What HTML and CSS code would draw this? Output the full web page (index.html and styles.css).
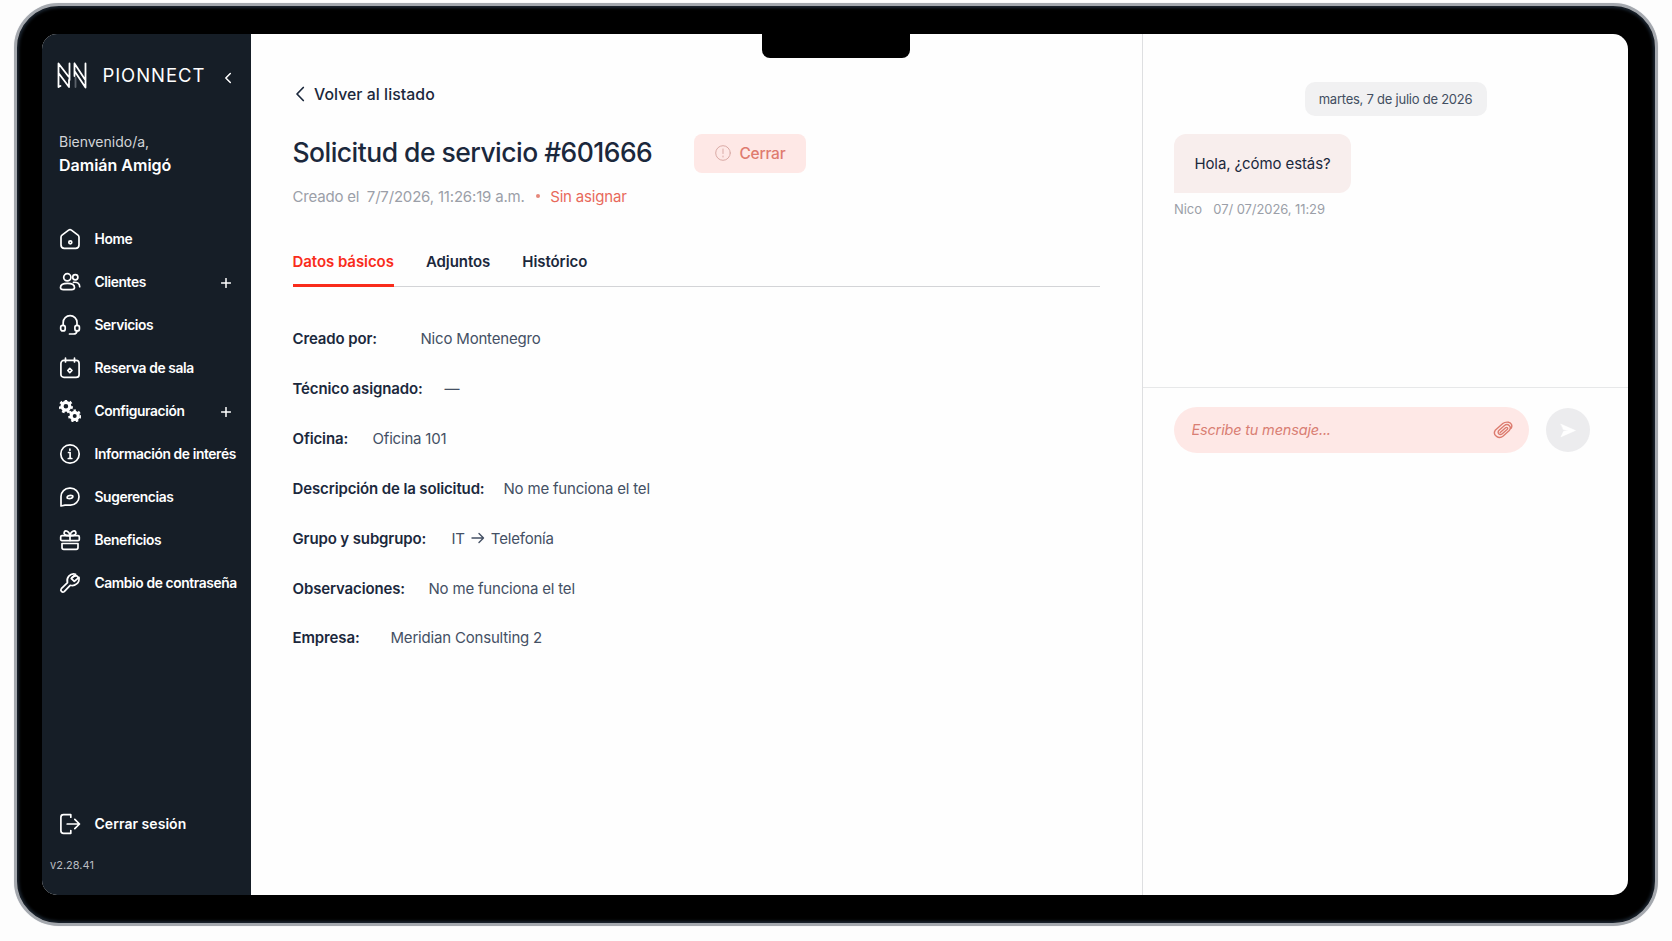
FILE: index.html
```html
<!DOCTYPE html>
<html lang="es">
<head>
    <meta charset="UTF-8">
    <title>Pionnect - Solicitud de servicio</title>
    <link rel="stylesheet" href="styles.css">
</head>
<body>
    <div class="device">
        <div class="notch"></div>
        <div class="screen">
            <aside class="sidebar">
                <div class="brand">
                    <svg class="brand-logo" viewBox="0 0 30 27">
                        <path d="M1.500 25V1.500L11.500 14.500M12.500 18V1.500M1.500 11L12 25V18M1.500 25L3.500 24M17.500 14V1.500M17.500 1.500L28 17.500M28.500 1.500V25.500L17.500 9"/>
                        <path class="dim" d="M18.500 25V15.500"/>
                    </svg>
                    <span class="brand-name">PIONNECT</span>
                    <svg class="collapse" viewBox="0 0 8 12"><path d="M6.300 1.500L1.800 6L6.300 10.500"/></svg>
                </div>
                <div class="welcome">
                    <span>Bienvenido/a,</span>
                    <strong>Damián Amigó</strong>
                </div>
                <nav class="menu">
                    <a class="menu-item">
                        <svg viewBox="0 0 22 22"><path d="M2 9.200Q2 8 3 7.200L9.600 2.100Q11 1.100 12.400 2.100L19 7.200Q20 8 20 9.200V17Q20 20.300 16.700 20.300H5.300Q2 20.300 2 17Z"/><circle cx="11.300" cy="14.300" r="1.500"/></svg>
                        <span>Home</span>
                    </a>
                    <a class="menu-item">
                        <svg viewBox="0 0 22 22"><circle cx="8.300" cy="6.300" r="3.600"/><circle cx="16.300" cy="6.200" r="2.600"/><path d="M1.500 16.500C1.500 13.800 4.300 12.300 8.500 12.300S15.500 13.800 15.500 16.500C15.500 18.200 14.200 18.600 12.600 18.600H4.400C2.800 18.600 1.500 18.200 1.500 16.500ZM14.500 11.300C18.400 10.900 20.700 12.400 20.700 15.700"/></svg>
                        <span>Clientes</span>
                        <svg class="plus" viewBox="0 0 10 10"><path d="M5 .5V9.500M.5 5H9.500"/></svg>
                    </a>
                    <a class="menu-item">
                        <svg viewBox="0 0 22 22"><path d="M4.200 11.500V8.500a6.900 6.900 0 0 1 13.800 0V11.500M18 16.700C18 18.800 16.600 20 14.300 20H10.500"/><rect x="1.700" y="11.300" width="4.500" height="5.600" rx="2"/><rect x="15.900" y="11.300" width="4.500" height="5.600" rx="2"/></svg>
                        <span>Servicios</span>
                    </a>
                    <a class="menu-item">
                        <svg viewBox="0 0 22 22"><rect x="1.900" y="3.400" width="18.200" height="17" rx="3"/><path d="M6.500 1.200V5M15.500 1.200V5M10.800 11.300L13 13.500L10.800 15.700L8.800 13.500Z"/></svg>
                        <span>Reserva de sala</span>
                    </a>
                    <a class="menu-item">
                        <svg class="gears" viewBox="0 0 22 22">
                            <circle cx="6.900" cy="6.300" r="3.900"/><circle class="teeth" cx="6.900" cy="6.300" r="5.800" pathLength="70"/>
                            <circle cx="15.700" cy="15.900" r="3.600"/><circle class="teeth" cx="15.700" cy="15.900" r="5.200" pathLength="70"/>
                        </svg>
                        <span>Configuración</span>
                        <svg class="plus" viewBox="0 0 10 10"><path d="M5 .5V9.500M.5 5H9.500"/></svg>
                    </a>
                    <a class="menu-item">
                        <svg viewBox="0 0 22 22"><circle cx="11" cy="11" r="9.200"/><path d="M9.500 9.500H11.100V15.400M9.300 15.500H12.800M10.900 6V7.200"/></svg>
                        <span>Información de interés</span>
                    </a>
                    <a class="menu-item">
                        <svg viewBox="0 0 22 22"><path d="M2 20V10.500A8.400 8.400 0 0 1 10.400 2.200H11.500A8.500 8.500 0 0 1 11.500 19.200H6Z"/><path d="M8.300 12.200C7.300 10 11 8.800 13.700 9.800C14.700 12 11 13.200 8.300 12.200Z"/></svg>
                        <span>Sugerencias</span>
                    </a>
                    <a class="menu-item">
                        <svg viewBox="0 0 22 22"><rect x="1.700" y="6.700" width="18.600" height="4.900" rx="1.200"/><path d="M3 14.500H19V18.600Q19 20.400 17.200 20.400H4.800Q3 20.400 3 18.600ZM11 6.700V11.500M11 6.500C5.500 7 4.500 4.500 5.300 3C6.300 1.300 10 1.500 11 6.500C12 1.500 15.700 1.300 16.700 3C17.500 4.500 16.500 7 11 6.500Z"/></svg>
                        <span>Beneficios</span>
                    </a>
                    <a class="menu-item">
                        <svg viewBox="0 0 22 22"><path d="M8.500 10.700L2.300 16.700C.8 18.500 3.300 21.200 5.200 19.600L11.200 13.300C15.700 14.700 20.900 11 20 5.300L15.300 9.400L12.400 6.600L16.500 2.200C11 .7 6.900 6 8.500 10.700Z"/><path d="M12.500 6.500C12.500 4.500 15.500 4.500 17.500 3.600L19 5.200"/></svg>
                        <span>Cambio de contraseña</span>
                    </a>
                </nav>
                <a class="menu-item logout">
                    <svg viewBox="0 0 22 22"><path d="M11.800 1.700H4.500Q1.900 1.700 1.900 4.300V17.700Q1.900 20.300 4.500 20.300H11.800V17.500M11.800 1.700V4.200M8.200 11H20.300M15.800 6.300L20.500 11L15.800 15.700"/></svg>
                    <span>Cerrar sesión</span>
                </a>
                <span class="version">v2.28.41</span>
            </aside>

            <main class="detail">
                <a class="back">
                    <svg viewBox="0 0 10 16"><path d="M8.300 1.500L2 8L8.300 14.500"/></svg>
                    Volver al listado
                </a>
                <div class="heading">
                    <h1>Solicitud de servicio #601666</h1>
                    <button class="close-btn">
                        <svg viewBox="0 0 16 16"><circle cx="8" cy="8" r="7.300"/><path d="M8 4V8.500M8 11V12"/></svg>
                        Cerrar
                    </button>
                </div>
                <div class="meta">
                    <span class="meta-label">Creado el</span>
                    <span class="meta-date">7/7/2026, 11:26:19 a.m.</span>
                    <span class="dot"></span>
                    <span class="status">Sin asignar</span>
                </div>
                <div class="tabs">
                    <a class="tab active">Datos básicos</a>
                    <a class="tab">Adjuntos</a>
                    <a class="tab">Histórico</a>
                </div>
                <dl class="fields">
                    <div class="field created"><dt>Creado por:</dt><dd>Nico Montenegro</dd></div>
                    <div class="field technician"><dt>Técnico asignado:</dt><dd>—</dd></div>
                    <div class="field office"><dt>Oficina:</dt><dd>Oficina 101</dd></div>
                    <div class="field description"><dt>Descripción de la solicitud:</dt><dd>No me funciona el tel</dd></div>
                    <div class="field group"><dt>Grupo y subgrupo:</dt><dd>IT <svg viewBox="0 0 14 12"><path d="M1 6H12.500M8 1.500L12.500 6L8 10.500"/></svg> Telefonía</dd></div>
                    <div class="field notes"><dt>Observaciones:</dt><dd>No me funciona el tel</dd></div>
                    <div class="field company"><dt>Empresa:</dt><dd>Meridian Consulting 2</dd></div>
                </dl>
            </main>

            <section class="chat">
                <div class="messages">
                    <div class="date-pill">martes, 7 de julio de 2026</div>
                    <div class="bubble">Hola, ¿cómo estás?</div>
                    <div class="bubble-info"><span>Nico</span><span>07/ 07/2026, 11:29</span></div>
                </div>
                <div class="composer">
                    <div class="message-box">
                        <input type="text" placeholder="Escribe tu mensaje...">
                        <svg viewBox="0 0 20 18"><path d="M7.200 11.600L12.600 6.800C14 5.700 15.400 7.300 14.100 8.500L9.300 12.700C6.600 15 3.500 11.700 6.100 9.300L11.200 4.800C15 1.700 19.500 6 16 9.700L10.200 15C6 18.500-.8 14.500 2.200 9.300L9.800 2.500C11.200 1.300 13.500 1 15.500 1.200C18.500 1.700 19.600 4.800 18.200 7.200"/></svg>
                    </div>
                    <button class="send-btn"><svg viewBox="0 0 18 16"><path d="M1 .8L17.500 8L1 15.200L4 8.900L10 8L4 7.100Z"/></svg></button>
                </div>
            </section>
        </div>
    </div>
</body>
</html>
```
FILE: styles.css
```css
* {
    box-sizing: border-box;
}
body {
    margin: 0;
    height: 100vh;
    overflow: hidden;
    background: #fdfdfd;
    color: #1b283c;
    font-family: Inter, "Liberation Sans", sans-serif;
    font-size: 15px;
}
svg {
    fill: none;
    stroke: currentColor;
    stroke-width: 1.7;
    stroke-linecap: round;
    stroke-linejoin: round;
    flex-shrink: 0;
}

/* laptop frame */
.device {
    position: relative;
    width: 1644px;
    height: 923px;
    margin: 3px 0 0 14px;
    padding: 28px 27px 28px 25px;
    background: #000;
    border: 3px solid #a4a8ae;
    border-radius: 45px;
    box-shadow: inset 0 0 3px 2px #1b2530, 0 0 1px #c9cbd0;
}
.notch {
    position: absolute;
    top: 27px;
    left: 745px;
    width: 148px;
    height: 25px;
    background: #000;
    border-radius: 0 0 8px 8px;
}
.screen {
    display: flex;
    height: 861px;
    border-radius: 15px;
    overflow: hidden;
    background: #fefefe;
}

/* sidebar */
.sidebar {
    width: 209px;
    flex-shrink: 0;
    display: flex;
    flex-direction: column;
    padding: 26px 0 23px;
    background: #161e27;
    color: #fff;
}
.brand {
    display: flex;
    align-items: center;
    height: 30px;
    padding-left: 15px;
}
.brand-logo {
    width: 30px;
    height: 27px;
    stroke-width: 1.8;
}
.brand-logo .dim {
    stroke: #5b626a;
}
.brand-name {
    width: 108px;
    margin-left: 15.500px;
    font-size: 18.500px;
    letter-spacing: .92px;
}
.collapse {
    width: 8px;
    height: 12px;
    margin: 5px 0 0 13px;
    stroke-width: 1.5;
}
.welcome {
    display: flex;
    flex-direction: column;
    padding: 40px 0 0 17px;
    font-size: 14px;
    line-height: 23px;
    color: #d3d5d8;
}
.welcome strong {
    margin-top: 1px;
    font-size: 16px;
    font-weight: 600;
    color: #fff;
}
.menu {
    margin-top: 41px;
}
.menu-item {
    display: flex;
    align-items: center;
    height: 42.9px;
    padding: 0 20px 0 17px;
    font-size: 13.800px;
    font-weight: 600;
    letter-spacing: -.38px;
    white-space: nowrap;
}
.menu-item svg {
    width: 22px;
    height: 22px;
    margin-right: 13.500px;
}
.menu-item .plus {
    width: 10px;
    height: 10px;
    margin: 2px 0 0 auto;
    stroke-width: 1.5;
}
.gears {
    stroke-width: 3.2;
}
.gears .teeth {
    stroke-width: 2.6;
    stroke-dasharray: 5 5;
    stroke-linecap: butt;
}
.logout {
    margin-top: auto;
    font-size: 14px;
    letter-spacing: .04px;
}
.version {
    margin: 13px 0 0 8px;
    font-size: 11px;
    line-height: 14px;
    color: #b9bdc2;
}

/* request detail */
.detail {
    width: 892px;
    flex-shrink: 0;
    padding: 49px 42px 0 41.500px;
    border-right: 1px solid #dedfe1;
}
.back {
    display: flex;
    align-items: center;
    height: 22px;
    padding-left: 2px;
    font-size: 15.800px;
    font-weight: 500;
    letter-spacing: .06px;
}
.back svg {
    width: 10px;
    height: 16px;
    margin-right: 9.500px;
}
.heading {
    display: flex;
    align-items: center;
    margin-top: 28.500px;
    height: 39px;
}
.heading h1 {
    width: 401px;
    margin: -2px 0 0;
    font-size: 26.500px;
    font-weight: 450;
    letter-spacing: -.53px;
    white-space: nowrap;
}
.close-btn {
    display: flex;
    align-items: center;
    width: 112px;
    height: 39px;
    padding: 0 0 0 21px;
    border: none;
    border-radius: 8px;
    background: #fee8e6;
    color: #de7b6f;
    font-family: inherit;
    font-size: 15.500px;
    font-weight: 450;
    letter-spacing: -.25px;
}
.close-btn svg {
    width: 16px;
    height: 16px;
    margin-right: 9px;
    color: #d9aaa5;
    stroke-width: 1;
}
.meta {
    display: flex;
    align-items: center;
    height: 24px;
    margin-top: 11.500px;
    color: #9b9fa8;
    letter-spacing: -.18px;
    white-space: nowrap;
}
.meta-date {
    margin-left: 7.500px;
}
.dot {
    width: 4px;
    height: 4px;
    margin: 0 10.500px 0 11px;
    border-radius: 50%;
    background: #e5877a;
}
.status {
    color: #e8695b;
}
.tabs {
    display: flex;
    gap: 32px;
    height: 41px;
    margin-top: 38px;
    border-bottom: 1px solid #d3d4d7;
    font-weight: 600;
    letter-spacing: -.06px;
}
.tab {
    height: 41px;
    padding-top: 6px;
    line-height: 20px;
}
.tab.active {
    color: #f92c1b;
    border-bottom: 3px solid #f92c1b;
}
.fields {
    margin: 27px 0 0;
}
.field {
    display: flex;
    align-items: center;
    height: 49.850px;
}
.field dt {
    font-weight: 600;
    letter-spacing: -.13px;
    white-space: nowrap;
}
.field dd {
    display: flex;
    align-items: center;
    margin: 0;
    color: #445064;
    letter-spacing: -.19px;
}
.field dd svg {
    width: 14px;
    height: 12px;
    margin: 0 6px;
    stroke-width: 1.4;
}
.created dt { width: 128px; }
.technician dt { width: 152px; }
.office dt { width: 80px; }
.description dt { width: 211px; }
.group dt { width: 159px; }
.notes dt { width: 136px; }
.company dt { width: 98px; }

/* chat */
.chat {
    flex: 1;
    min-width: 0;
}
.messages {
    display: flex;
    flex-direction: column;
    align-items: flex-start;
    height: 354px;
    padding: 48px 32px 0 31px;
    border-bottom: 1px solid #e7e8e9;
}
.date-pill {
    align-self: center;
    width: 182px;
    height: 34px;
    margin-left: 21px;
    border-radius: 10px;
    background: #f1f1f2;
    color: #424e61;
    font-size: 13px;
    line-height: 34px;
    letter-spacing: -.24px;
    text-align: center;
    white-space: nowrap;
}
.bubble {
    width: 177px;
    height: 59px;
    margin-top: 18px;
    border-radius: 12px 12px 12px 0;
    background: #f8eeed;
    line-height: 60px;
    letter-spacing: -.1px;
    text-align: center;
    white-space: nowrap;
}
.bubble-info {
    display: flex;
    gap: 11.500px;
    margin-top: 7px;
    color: #9b9fa8;
    font-size: 13px;
    line-height: 18px;
    letter-spacing: -.08px;
}
.composer {
    display: flex;
    align-items: center;
    gap: 17px;
    padding: 19px 0 0 31px;
}
.message-box {
    display: flex;
    align-items: center;
    width: 355px;
    height: 46px;
    padding: 0 16px 1px 17.500px;
    border-radius: 23px;
    background: #fee8e6;
    color: #dc7b6e;
}
.message-box input {
    flex: 1;
    min-width: 0;
    padding: 0;
    border: none;
    outline: none;
    background: none;
    font-family: inherit;
    font-size: 14.500px;
    letter-spacing: -.18px;
}
.message-box input::placeholder {
    color: #d97e73;
    font-style: italic;
}
.message-box svg {
    width: 20px;
    height: 18px;
    stroke-width: 1.4;
}
.send-btn {
    display: flex;
    align-items: center;
    justify-content: center;
    width: 44px;
    height: 44px;
    padding: 0;
    border: none;
    border-radius: 50%;
    background: #ececee;
    color: #fff;
}
.send-btn svg {
    width: 16px;
    height: 15px;
    fill: #fff;
    stroke-width: .5;
}
```
